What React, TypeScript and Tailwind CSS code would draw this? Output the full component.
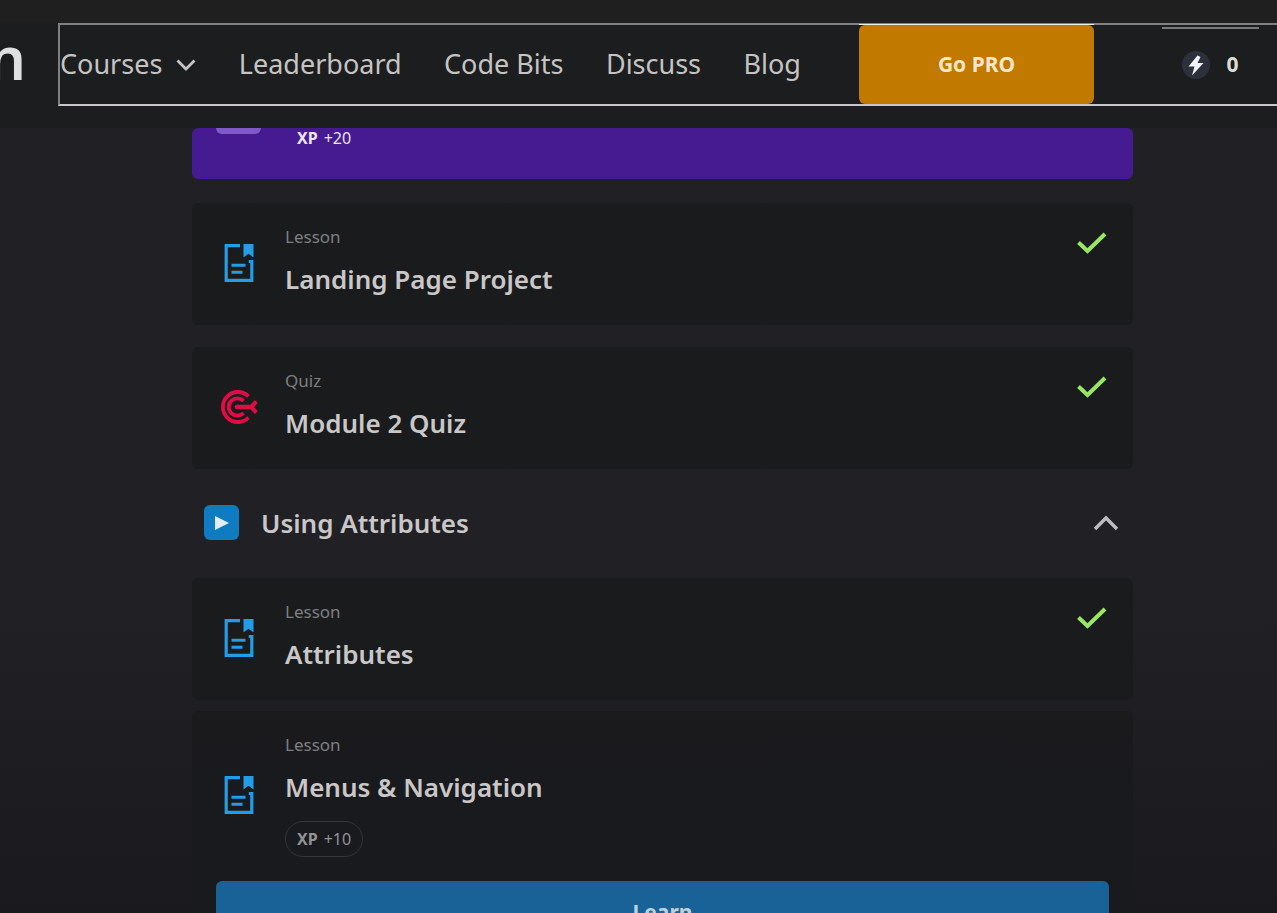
import { ReactNode } from "react";

function LessonIcon() {
  return (
    <svg width="30" height="38" viewBox="0 0 30 38" fill="none" stroke="#259ce6" strokeWidth="3.2" aria-hidden="true">
      <path d="M16 1.7H2.2v34.6h25.6V17.5h-3" />
      <path d="M7.5 21.2h14M7.5 28.2h11" strokeWidth="3" />
      <path d="M19.5 0h10v13.5l-5-3.8-5 3.8z" fill="#259ce6" stroke="none" />
    </svg>
  );
}

function QuizIcon() {
  return (
    <svg width="38" height="34" viewBox="0 0 38 34" fill="none" stroke="#e30b45" strokeWidth="3.8" aria-hidden="true">
      <path d="M28.5 6.4A15 15 0 1 0 28.5 27.6" />
      <path d="M23.5 11A8.6 8.6 0 1 0 23.5 23" />
      <path d="M17 17h15" strokeWidth="4.6" strokeLinecap="round" />
      <path d="M36.4 11.5L31 17l5.4 5.5" strokeWidth="4" />
    </svg>
  );
}

function CheckIcon() {
  return (
    <svg width="30" height="24" viewBox="0 0 30 24" fill="none" stroke="#99e861" strokeWidth="4" role="img" aria-label="Completed">
      <path d="M1.5 11.5l9 8.5L28 3" />
    </svg>
  );
}

function XpPill({ amount, className }: { amount: number; className: string }) {
  return (
    <span className={`inline-flex h-9 items-center gap-[6px] rounded-full border px-[11px] text-base leading-6 ${className}`}>
      <b>XP</b>
      <span>+{amount}</span>
    </span>
  );
}

type CardProps = {
  kind: "Lesson" | "Quiz";
  title: string;
  done?: boolean;
  xp?: number;
  children?: ReactNode;
};

function ModuleCard({ kind, title, done, xp, children }: CardProps) {
  return (
    <article className="rounded-md bg-[#1a1b1d]/90">
      <div className="flex items-center pl-6 pr-[26px]">
        <div className="flex w-[45px] shrink-0 justify-center pb-[2px]">{kind === "Quiz" ? <QuizIcon /> : <LessonIcon />}</div>
        <div className={`flex-1 pl-6 pt-[22px] ${xp ? "pb-6" : "pb-7"}`}>
          <p className="text-[17px] leading-6 text-[#7f7f82]">{kind}</p>
          <h3 className="mt-3 text-[26px] font-semibold leading-9 text-[#c9c7c7]">{title}</h3>
          {xp && (
            <div className="mt-4 flex">
              <XpPill amount={xp} className="border-[#343538] text-[#929294]" />
            </div>
          )}
        </div>
        {done && (
          <div className="self-start pt-7">
            <CheckIcon />
          </div>
        )}
      </div>
      {children}
    </article>
  );
}

export default function App() {
  return (
    <div className="flex h-screen flex-col overflow-hidden bg-linear-to-b from-[#212025] from-65% to-[#1a191e] font-['Noto_Sans','Open_Sans',sans-serif]">
      <header className="flex h-32 shrink-0 bg-linear-to-b from-[#201f20] from-18% to-[#1c1d1f] to-18% pb-[22px] pt-[23px]">
        <a href="#home" aria-label="Home" className="flex w-[58px] shrink-0 items-center overflow-hidden">
          <span className="flex w-[26px] justify-end overflow-hidden pb-4 text-[60px] font-semibold leading-[72px] text-[#dedfe1]">n</span>
        </a>
        <nav className="flex flex-1 border-2 border-r-0 border-[#7f8081] border-b-[#c9c7cc] text-[27px] text-[#c5c4c2]">
          <div className="flex flex-1 items-center justify-between pr-[58px]">
            <button type="button" className="flex items-center gap-[14px]">
              Courses
              <svg width="20" height="14" viewBox="0 0 20 14" fill="none" stroke="currentColor" strokeWidth="2.8" aria-hidden="true">
                <path d="M1.5 2.5l8.5 8.5 8.5-8.5" />
              </svg>
            </button>
            <a href="#leaderboard">Leaderboard</a>
            <a href="#code-bits">Code Bits</a>
            <a href="#discuss">Discuss</a>
            <a href="#blog">Blog</a>
          </div>
          <div className="-mt-px flex w-[235px] shrink-0 border-t border-[#f1eee6]">
            <button type="button" className="flex-1 rounded-md bg-[#c17900] text-[21px] font-bold text-[#f8e6cd]">
              Go PRO
            </button>
          </div>
          <div className="ml-[68px] mr-[18px] mt-[2px] flex w-[97px] shrink-0 items-center justify-center gap-4 border-t-2 border-[#77797a] pb-1 text-[21px] font-bold text-[#dddcd9]">
            <svg width="28" height="28" viewBox="0 0 28 28" aria-hidden="true">
              <circle cx="14" cy="14" r="14" fill="#2c303b" />
              <path d="M15.5 4.5l-9 11h6l-2.5 9L21.5 12h-6l3-6z" fill="#f0f3f7" />
            </svg>
            <span>0</span>
          </div>
        </nav>
      </header>

      <main className="min-h-0 flex-1 overflow-hidden pl-48 pr-36">
        <section className="flex h-[51px] items-start rounded-md bg-[#461b91] pl-6">
          <div className="h-[6px] w-[45px] rounded-b-2xl bg-[#8159cb]" />
          <div className="-mt-2 pl-6">
            <XpPill amount={20} className="border-transparent text-[#ece2fa]" />
          </div>
        </section>

        <div className="mt-6 flex flex-col gap-[22px]">
          <ModuleCard kind="Lesson" title="Landing Page Project" done />
          <ModuleCard kind="Quiz" title="Module 2 Quiz" done />
        </div>

        <button type="button" className="flex h-[109px] w-full items-center pb-[2px] pl-3 pr-[14px] text-left">
          <span className="flex size-[35px] items-center justify-center rounded-md bg-[#0f7bc0]">
            <svg width="14" height="14" viewBox="0 0 14 14" fill="#e1eefa" aria-hidden="true">
              <path d="M0 0l14 7L0 14z" />
            </svg>
          </span>
          <span className="flex-1 pl-[22px] text-[26px] font-semibold leading-9 text-[#c9c7c7]">Using Attributes</span>
          <svg width="26" height="16" viewBox="0 0 26 16" fill="none" stroke="#bdbdbf" strokeWidth="3.4" aria-hidden="true">
            <path d="M2 14L13 3l11 11" />
          </svg>
        </button>

        <div className="flex flex-col gap-[11px]">
          <ModuleCard kind="Lesson" title="Attributes" done />
          <ModuleCard kind="Lesson" title="Menus & Navigation" xp={10}>
            <div className="px-6 pb-6">
              <button type="button" className="h-16 w-full rounded-md bg-[#196297] text-[21px] font-bold text-[#b9d2e0]">
                Learn
              </button>
            </div>
          </ModuleCard>
        </div>
      </main>
    </div>
  );
}
